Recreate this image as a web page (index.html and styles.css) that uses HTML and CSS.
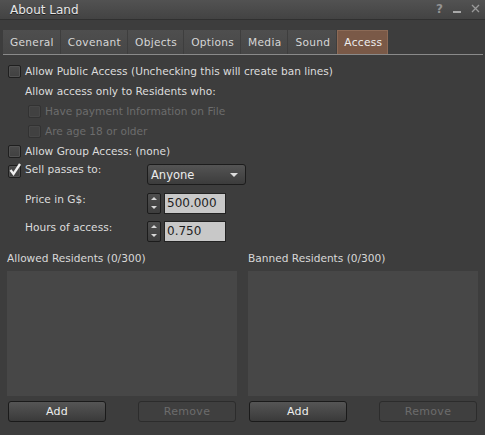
FILE: index.html
```html
<!DOCTYPE html>
<html>
<head>
<meta charset="utf-8">
<link rel="stylesheet" href="styles.css">
</head>
<body>
<div class="floater">
  <div class="titlebar">
    <span class="title">About Land</span>
    <div class="ctrls">
      <span class="ctrl q">?</span>
      <span class="ctrl min"></span>
      <svg class="ctrl close" width="9" height="9" viewBox="0 0 9 9"><path d="M1 1L8 8M8 1L1 8" stroke="#9a9a9a" stroke-width="1.3"/></svg>
    </div>
  </div>
  <div class="tabs">
    <div class="tab">General</div>
    <div class="tab">Covenant</div>
    <div class="tab">Objects</div>
    <div class="tab">Options</div>
    <div class="tab">Media</div>
    <div class="tab">Sound</div>
    <div class="tab active">Access</div>
  </div>
  <div class="panel">
    <div class="row">
      <span class="cb"></span><span class="lbl">Allow Public Access (Unchecking this will create ban lines)</span>
    </div>
    <div class="row indent">
      <span class="lbl">Allow access only to Residents who:</span>
    </div>
    <div class="row indent2">
      <span class="cb disabled"></span><span class="lbl dim">Have payment Information on File</span>
    </div>
    <div class="row indent2">
      <span class="cb disabled"></span><span class="lbl dim">Are age 18 or older</span>
    </div>
    <div class="row">
      <span class="cb"></span><span class="lbl">Allow Group Access: (none)</span>
    </div>
    <div class="row sell">
      <span class="cb checked"><svg width="14" height="15" viewBox="0 0 14 15"><path d="M2.5 8L5.5 12L12 2" fill="none" stroke="#f2f2f2" stroke-width="2.3"/></svg></span><span class="lbl wide">Sell passes to:</span>
      <div class="combo"><span>Anyone</span><span class="arrow"></span></div>
    </div>
    <div class="row field price">
      <span class="lbl fieldlbl">Price in G$:</span>
      <div class="spinner"><span class="up"></span><span class="down"></span></div>
      <div class="input">500.000</div>
    </div>
    <div class="row field hours">
      <span class="lbl fieldlbl">Hours of access:</span>
      <div class="spinner"><span class="up"></span><span class="down"></span></div>
      <div class="input">0.750</div>
    </div>
    <div class="lists">
      <div class="col">
        <div class="colhead">Allowed Residents (0/300)</div>
        <div class="listbox"></div>
        <div class="btns">
          <div class="btn">Add</div>
          <div class="btn off">Remove</div>
        </div>
      </div>
      <div class="col">
        <div class="colhead">Banned Residents (0/300)</div>
        <div class="listbox"></div>
        <div class="btns">
          <div class="btn">Add</div>
          <div class="btn off">Remove</div>
        </div>
      </div>
    </div>
  </div>
</div>
</body>
</html>
```
FILE: styles.css
```css
html, body {
  margin: 0;
  padding: 0;
  background: #3d3d3d;
}
.floater {
  width: 485px;
  height: 435px;
  background: #3d3d3d;
  font-family: "DejaVu Sans", sans-serif;
  font-size: 10.6px;
  color: #dcdcdc;
  overflow: hidden;
}
.titlebar {
  height: 19px;
  border-bottom: 1px solid #303030;
  background: linear-gradient(#525252, #434343);
  display: flex;
  align-items: center;
  justify-content: space-between;
  padding: 0 5px 0 10px;
}
.title {
  font-size: 12px;
  color: #e8e8e8;
  text-shadow: 0 1px 0 #222;
}
.ctrls {
  display: flex;
  align-items: center;
  gap: 10px;
  margin-top: -2px;
}
.ctrl.q {
  font-size: 12px;
  font-weight: bold;
  color: #939393;
}
.ctrl.min {
  width: 8px;
  height: 2px;
  background: #a8a8a8;
  margin-top: 6px;
}
.tabs {
  display: flex;
  margin: 10px 2px 0 3px;
  height: 24px;
  border-bottom: 1px solid #8a8a8a;
}
.tab {
  height: 24px;
  line-height: 24px;
  padding: 0 6px 0 7px;
  background: linear-gradient(#4e4e4e, #474747);
  border-right: 1px solid #3e3e3e;
  color: #d6d6d6;
  letter-spacing: 0.3px;
}
.tab.active {
  background: #7a5947;
  border: 1px solid #8c6a56;
  border-bottom: none;
  color: #eeeeee;
  height: 23px;
  line-height: 23px;
  padding: 0 5px 0 6px;
}
.panel {
  padding: 6px 7px 0 7px;
}
.row {
  height: 20px;
  display: flex;
  align-items: center;
  gap: 4px;
  padding-left: 1px;
}
.indent { padding-left: 18px; }
.indent2 { padding-left: 21px; }
.cb {
  width: 11px;
  height: 11px;
  border: 1px solid #1f1f1f;
  border-radius: 2px;
  background: linear-gradient(#4a4a4a, #414141);
  box-shadow: inset 0 0 0 1px #525252;
  flex: none;
  position: relative;
}
.cb.disabled {
  border-color: #323232;
  background: #414141;
  box-shadow: inset 0 0 0 1px #474747;
}
.cb.checked svg {
  position: absolute;
  left: -1px;
  top: -4px;
}
.lbl {
  white-space: nowrap;
}
.dim { color: #6c6c6c; }
.sell {
  align-items: flex-start;
}
.sell .cb { margin-top: 4px; }
.sell .lbl { margin-top: 2px; }
.wide { width: 118px; }
.combo {
  margin-top: 3px;
  height: 19px;
  border: 1px solid #1c1c1c;
  border-radius: 3px;
  background: linear-gradient(#545454, #3c3c3c);
  display: flex;
  align-items: center;
  justify-content: space-between;
  padding: 0 5px 0 3px;
  box-sizing: content-box;
  width: 89px;
  color: #ececec;
  font-size: 11.5px;
}
.arrow {
  width: 0;
  height: 0;
  border-left: 4px solid transparent;
  border-right: 4px solid transparent;
  border-top: 4px solid #dddddd;
  margin-right: 2px;
}
.field {
  gap: 0;
  padding-left: 18px;
}
.price { margin-top: 12px; }
.hours { margin-top: 8px; }
.fieldlbl {
  width: 122px;
  margin-top: -8px;
  align-self: center;
  line-height: 12px;
}
.spinner {
  width: 12px;
  height: 19px;
  border: 1px solid #1c1c1c;
  border-radius: 2px;
  background: linear-gradient(#4e4e4e, #3e3e3e);
  display: flex;
  flex-direction: column;
  justify-content: space-around;
  align-items: center;
  margin-right: 3px;
}
.spinner .up {
  width: 0; height: 0;
  border-left: 3px solid transparent;
  border-right: 3px solid transparent;
  border-bottom: 3px solid #d8d8d8;
}
.spinner .down {
  width: 0; height: 0;
  border-left: 3px solid transparent;
  border-right: 3px solid transparent;
  border-top: 3px solid #d8d8d8;
}
.input {
  width: 58px;
  height: 19px;
  border: 1px solid #222;
  background: #c8c8c8;
  color: #1e1e1e;
  font-size: 12px;
  line-height: 19px;
  padding-left: 2px;
}
.lists {
  display: flex;
  gap: 11px;
  margin-top: 9px;
}
.col {
  width: 230px;
  display: flex;
  flex-direction: column;
}
.colhead {
  height: 14px;
  line-height: 14px;
  color: #d8d8d8;
  padding-top: 1px;
}
.listbox {
  margin-top: 6px;
  height: 125px;
  background: #474747;
}
.btns {
  display: flex;
  justify-content: space-between;
  padding: 0 1px;
  margin-top: 5px;
}
.btn {
  width: 96px;
  height: 19px;
  border: 1px solid #1a1a1a;
  border-radius: 3px;
  background: linear-gradient(#555555, #3a3a3a);
  color: #eeeeee;
  text-align: center;
  line-height: 19px;
  font-size: 11px;
  letter-spacing: 0.3px;
}
.btn.off {
  background: #3f3f3f;
  border-color: #2c2c2c;
  color: #6c6c6c;
}
```
